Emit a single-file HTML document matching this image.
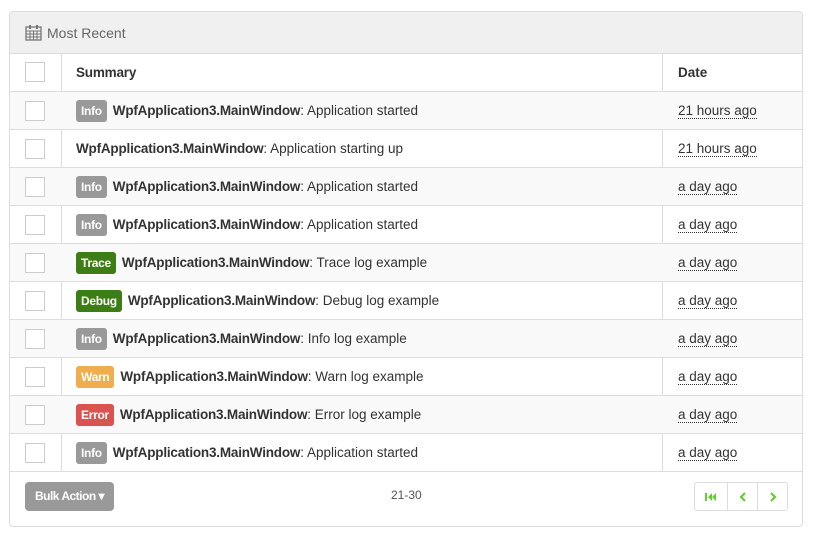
<!DOCTYPE html>
<html><head><style>
body{margin:0;background:#fff;font-family:"Liberation Sans",sans-serif;font-size:13px;color:#333;}
.panel{position:absolute;left:9px;top:11px;width:792px;height:514px;border:1px solid #ddd;border-radius:4px;overflow:hidden;background:#fff}
.ph{height:41px;background:#f0f0f0;border-bottom:1px solid #ddd;display:flex;align-items:center;padding-left:15px;color:#666;font-size:14px}
.ph svg{margin-right:5px}
.row{position:absolute;left:0;width:792px;border-bottom:1px solid #ddd;display:flex;align-items:center}
.cb{position:absolute;left:15px;width:18px;height:18px;border:1px solid #ccc;background:#fff}
.sum{position:absolute;left:66px;display:flex;align-items:center;font-size:13.5px}
.date{position:absolute;left:668px;border-bottom:1px dotted #333;line-height:15px;font-size:13.5px}
.vl{position:absolute;top:41px;height:419px;width:1px;background:#ddd}
.lb{color:#fff;font-size:12px;font-weight:bold;padding:0 5px;height:22px;line-height:22px;border-radius:3px;margin-right:6px;letter-spacing:-0.3px}
.i{background:#999}.t{background:#3c7d15}.w{background:#f0ad4e}.e{background:#d9534f}
b{font-weight:bold;letter-spacing:-0.2px}
.alt{background:#f9f9f9}
</style></head><body>
<div class="panel">
<div class="ph"><svg width="17" height="17" viewBox="0 0 17 17"><rect x="1" y="3" width="15" height="13" fill="none" stroke="#777" stroke-width="1.3"/><path d="M1 7H16M1 10H16M1 13H16M5 7V16M8.5 7V16M12 7V16" stroke="#777" stroke-width="1"/><rect x="4" y="1" width="2" height="4" fill="#777"/><rect x="11" y="1" width="2" height="4" fill="#777"/></svg>Most Recent</div>
<div class="vl" style="left:51px"></div><div class="vl" style="left:652px"></div>
<div class="row" style="top:41px;height:38px"><div class="cb"></div><div class="sum"><b>Summary</b></div><div style="position:absolute;left:668px;font-weight:bold;font-size:13.5px">Date</div></div>
<div class="row alt" style="top:80px;height:37px"><div class="cb"></div><div class="sum"><span class="lb i">Info</span><b>WpfApplication3.MainWindow</b>: Application started</div><div class="date">21 hours ago</div></div>
<div class="row" style="top:118px;height:37px"><div class="cb"></div><div class="sum"><b>WpfApplication3.MainWindow</b>: Application starting up</div><div class="date">21 hours ago</div></div>
<div class="row alt" style="top:156px;height:37px"><div class="cb"></div><div class="sum"><span class="lb i">Info</span><b>WpfApplication3.MainWindow</b>: Application started</div><div class="date">a day ago</div></div>
<div class="row" style="top:194px;height:37px"><div class="cb"></div><div class="sum"><span class="lb i">Info</span><b>WpfApplication3.MainWindow</b>: Application started</div><div class="date">a day ago</div></div>
<div class="row alt" style="top:232px;height:37px"><div class="cb"></div><div class="sum"><span class="lb t">Trace</span><b>WpfApplication3.MainWindow</b>: Trace log example</div><div class="date">a day ago</div></div>
<div class="row" style="top:270px;height:37px"><div class="cb"></div><div class="sum"><span class="lb t">Debug</span><b>WpfApplication3.MainWindow</b>: Debug log example</div><div class="date">a day ago</div></div>
<div class="row alt" style="top:308px;height:37px"><div class="cb"></div><div class="sum"><span class="lb i">Info</span><b>WpfApplication3.MainWindow</b>: Info log example</div><div class="date">a day ago</div></div>
<div class="row" style="top:346px;height:37px"><div class="cb"></div><div class="sum"><span class="lb w">Warn</span><b>WpfApplication3.MainWindow</b>: Warn log example</div><div class="date">a day ago</div></div>
<div class="row alt" style="top:384px;height:37px"><div class="cb"></div><div class="sum"><span class="lb e">Error</span><b>WpfApplication3.MainWindow</b>: Error log example</div><div class="date">a day ago</div></div>
<div class="row" style="top:422px;height:37px"><div class="cb"></div><div class="sum"><span class="lb i">Info</span><b>WpfApplication3.MainWindow</b>: Application started</div><div class="date">a day ago</div></div>
<div style="position:absolute;left:15px;top:470px;width:89px;height:29px;background:#999;border-radius:4px;color:#fff;font-size:12px;font-weight:bold;line-height:29px;text-align:center;letter-spacing:-0.5px">Bulk Action ▾</div>
<div style="position:absolute;left:381px;top:476px;font-size:12px;color:#555">21-30</div>
<div style="position:absolute;left:684px;top:470px;width:92px;height:27px;border:1px solid #ddd;border-radius:3px;display:flex">
<div style="width:32px;border-right:1px solid #ddd;display:flex;align-items:center;justify-content:center"><svg width="12" height="10" viewBox="0 0 12 10"><rect x="0" y="1" width="2" height="8" fill="#6c3"/><path d="M7 1L3 5L7 9M11 1L7 5L11 9" fill="#6c3"/></svg></div>
<div style="width:29px;border-right:1px solid #ddd;display:flex;align-items:center;justify-content:center"><svg width="8" height="10" viewBox="0 0 8 10"><path d="M6 1L2 5L6 9" fill="none" stroke="#6c3" stroke-width="2.2"/></svg></div>
<div style="flex:1;display:flex;align-items:center;justify-content:center"><svg width="8" height="10" viewBox="0 0 8 10"><path d="M2 1L6 5L2 9" fill="none" stroke="#6c3" stroke-width="2.2"/></svg></div></div>
</div>
</body></html>
